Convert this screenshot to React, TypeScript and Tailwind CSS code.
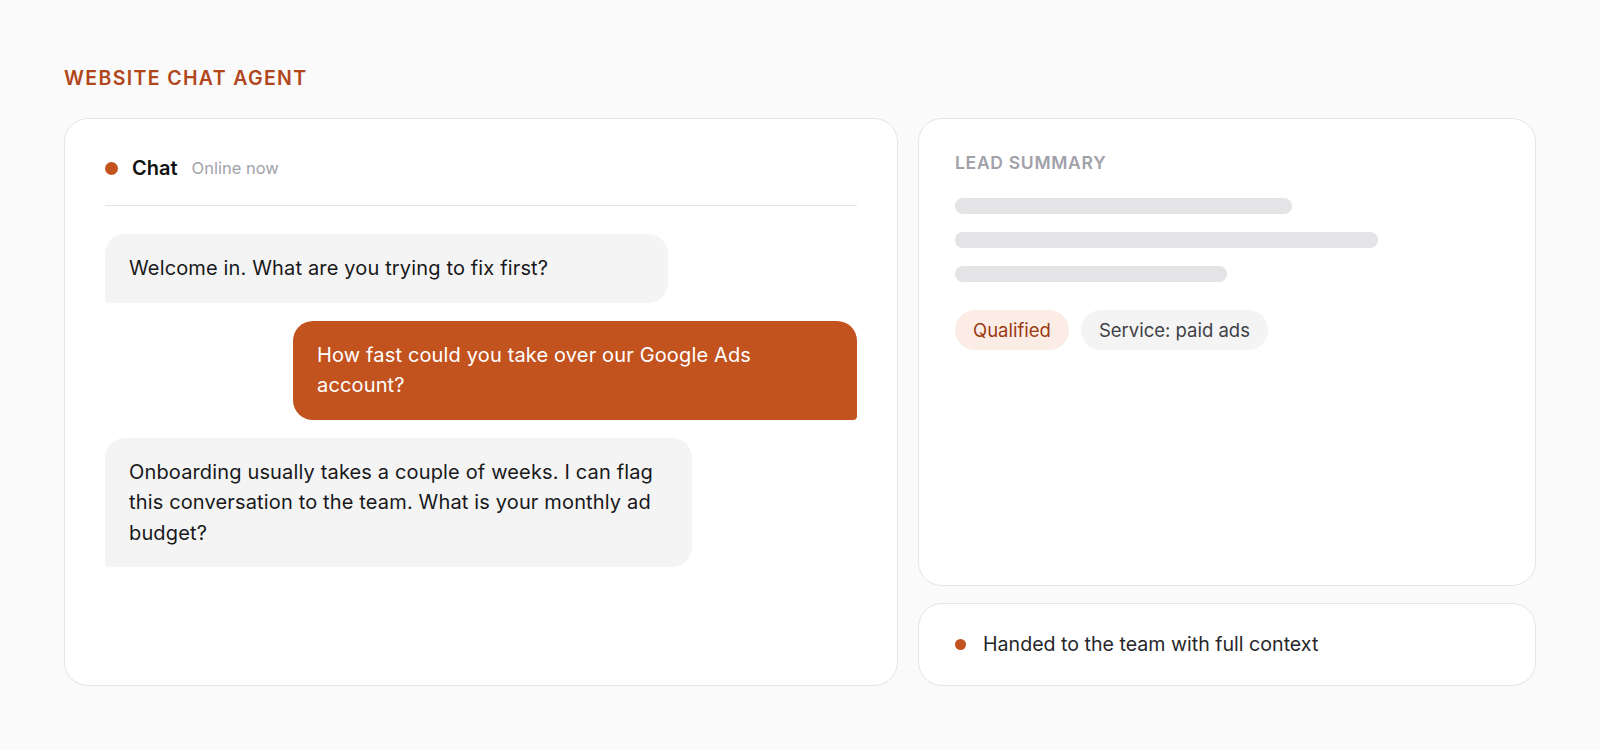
const BAR_WIDTHS = ['w-[337px]', 'w-[423px]', 'w-[272px]']

function Dot({ size }: { size: string }) {
  return <span className={`${size} shrink-0 rounded-full bg-[#c2531f]`} />
}

function ChatCard() {
  return (
    <div className="h-[568px] rounded-3xl border border-[#e5e5e5] bg-white p-10">
      {/* header */}
      <div className="flex items-center gap-[14px] border-b border-[#e5e5e5] pb-[28px]">
        <Dot size="w-[13px] h-[13px]" />
        <span className="text-[20px] font-semibold leading-[18px] text-[#111111]">Chat</span>
        <span className="text-[16.5px] leading-[18px] text-[#a1a1aa]">Online now</span>
      </div>

      {/* messages */}
      <div className="mt-[28px] flex flex-col gap-[18px] text-[20px] leading-[30.5px] tracking-[0.15px]">
        <div className="w-[563px] rounded-[20px] rounded-bl-[4px] bg-[#f4f4f4] px-6 py-[19px] text-[#18181b]">
          Welcome in. What are you trying to fix first?
        </div>
        <div className="w-[564px] self-end rounded-[20px] rounded-br-[4px] bg-[#c2531f] px-6 py-[19px] text-white">
          How fast could you take over our Google Ads
          <br />
          account?
        </div>
        <div className="w-[587px] rounded-[20px] rounded-bl-[4px] bg-[#f4f4f4] px-6 py-[19px] text-[#18181b]">
          Onboarding usually takes a couple of weeks. I can flag
          <br />
          this conversation to the team. What is your monthly ad
          <br />
          budget?
        </div>
      </div>
    </div>
  )
}

function LeadCard() {
  return (
    <div className="flex-1 rounded-3xl border border-[#e5e5e5] bg-white px-9 pt-[34px]">
      <div className="text-[17.5px] font-semibold leading-[20px] tracking-[0.04em] text-[#a1a1aa]">LEAD SUMMARY</div>
      <div className="mt-[25px] flex flex-col gap-[18px]">
        {BAR_WIDTHS.map(w => (
          <div key={w} className={`${w} h-4 rounded-full bg-[#e4e4e7]`} />
        ))}
      </div>
      <div className="mt-7 flex gap-3 text-[18.5px] leading-[40px]">
        <span className="rounded-full bg-[#fbece5] px-[18px] text-[#9a3a12]">Qualified</span>
        <span className="rounded-full bg-[#f4f4f5] px-[18px] text-[#3f3f46]">Service: paid ads</span>
      </div>
    </div>
  )
}

export default function App() {
  return (
    <div className="min-h-screen bg-[#fafafa] px-16 pt-[64px] font-['Inter',sans-serif]">
      <h2 className="text-[19.5px] font-semibold leading-[28px] tracking-[0.07em] text-[#b1461c]">WEBSITE CHAT AGENT</h2>

      <div className="mt-[26px] grid grid-cols-[834px_618px] gap-5">
        <ChatCard />

        <div className="flex flex-col gap-[17px]">
          <LeadCard />
          <div className="flex items-center gap-[17px] rounded-3xl border border-[#e5e5e5] bg-white px-9 py-[28px]">
            <Dot size="w-[11px] h-[11px]" />
            <span className="text-[19.6px] leading-[25px] text-[#27272a]">Handed to the team with full context</span>
          </div>
        </div>
      </div>
    </div>
  )
}
